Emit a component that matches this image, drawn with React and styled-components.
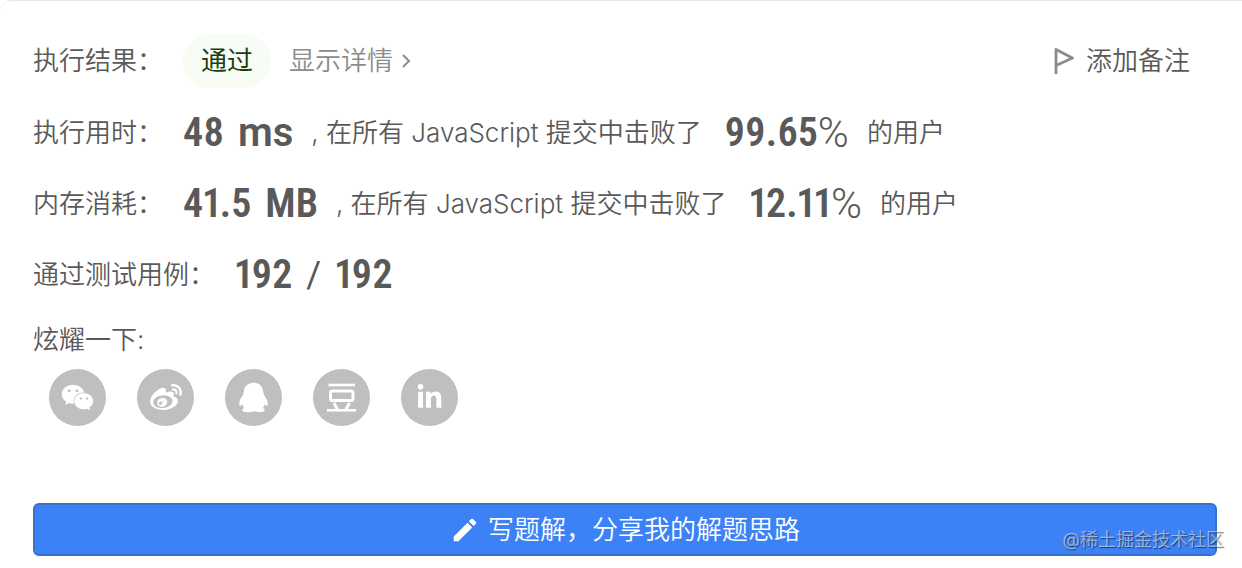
import React from 'react';
import styled, { createGlobalStyle } from 'styled-components';
import { FaWeixin, FaWeibo, FaLinkedinIn } from 'react-icons/fa';
import { MdEdit } from 'react-icons/md';

const GlobalStyle = createGlobalStyle`
  *, *::before, *::after { box-sizing: border-box; }
  body {
    margin: 0;
    background: #fff;
    color: #595959;
    font-family: Inter, "Noto Sans CJK SC", sans-serif;
    font-size: 26px;
    font-weight: 350;
    line-height: 40px;
  }
  button { font: inherit; color: inherit; cursor: pointer; }
`;

const Panel = styled.main`
  position: relative;
  padding: 24px 25px 12px 33px;
  border-top: 1px solid #e8e8e8;
  border-top-left-radius: 12px;
`;

const Row = styled.div`
  display: flex;
  align-items: center;
  height: ${(p) => p.$height}px;
  padding-right: 27px;
  white-space: nowrap;
`;

const Label = styled.span`
  margin-right: 20px;
`;

const Status = styled.strong`
  padding: 7px 18px;
  border-radius: 27px;
  background: #f7fdf5;
  color: #1d3d12;
  font-weight: 400;
`;

const DetailLink = styled.a`
  display: flex;
  align-items: center;
  gap: 8px;
  margin-left: 18px;
  color: #8c8c8c;
  text-decoration: none;
`;

const NoteButton = styled.button`
  display: flex;
  align-items: center;
  gap: 10px;
  margin-left: auto;
  padding: 0;
  border: 0;
  background: none;
`;

const Figure = styled.strong`
  display: flex;
  align-items: center;
  gap: 14px;
  font-family: "Roboto Condensed", Roboto, sans-serif;
  font-size: 40px;
  font-weight: 600;
  font-variant-numeric: proportional-nums;
`;

const Unit = styled.span`
  font-family: ${(p) => (p.$wide ? 'Roboto' : '"Roboto Condensed"')}, sans-serif;
`;

const Percent = styled.span`
  font-family: Roboto, sans-serif;
  font-size: 42px;
  font-weight: 300;
`;

const Sentence = styled.span`
  margin-left: 18px;
  margin-right: 23px;
`;

const Slash = styled.span`
  font-family: Roboto, sans-serif;
  font-size: 36px;
  font-weight: 400;
`;

const ShareTitle = styled.h2`
  margin: 8px 0 7px;
  font-size: 26px;
  font-weight: 350;
  line-height: 44px;
`;

const ShareList = styled.div`
  display: flex;
  gap: 31px;
  padding-left: 16px;
`;

const ShareButton = styled.button`
  display: flex;
  align-items: center;
  justify-content: center;
  width: 57px;
  height: 57px;
  padding: 0;
  border: 0;
  border-radius: 50%;
  background: #bfbfbf;
  color: #fff;
`;

const WriteButton = styled.button`
  display: flex;
  align-items: center;
  justify-content: center;
  gap: 8px;
  width: 100%;
  height: 53px;
  margin-top: 77px;
  border: 2px solid #3971c9;
  border-radius: 6px;
  background: #3c82f6;
  color: #fff;
`;

const Watermark = styled.span`
  position: absolute;
  right: 18px;
  bottom: 14px;
  color: rgba(255, 255, 255, 0.5);
  font-size: 18px;
  font-weight: 400;
  line-height: 28px;
  text-shadow: 1px 1px 1px rgba(0, 0, 0, 0.55);
  pointer-events: none;
`;

const Chevron = () => (
  <svg width="10" height="16" viewBox="0 0 10 16" fill="none" stroke="currentColor" strokeWidth="2" aria-hidden="true">
    <path d="M2 2l6 6-6 6" />
  </svg>
);

const Flag = () => (
  <svg width="22" height="28" viewBox="0 0 22 28" fill="none" stroke="#8c8c8c" strokeWidth="2.8" strokeLinejoin="round" aria-hidden="true">
    <path d="M2 27V2.500L18.500 11 2 18.500" />
  </svg>
);

const Penguin = () => (
  <svg width="31" height="31" viewBox="0 0 31 31" fill="currentColor" aria-hidden="true">
    <path d="M15.500.8C9.800.8 6.300 4.600 5.800 9.700L5 13C2.500 16 .8 20.500 1.300 23c.5 1.500 1.900.6 3-1 .4 1.700 1 3 2 4-1.700.6-2.300 1.600-1.800 2.700.9 2 7.500 1.700 11 .5 3.500 1.200 10.100 1.500 11-.5.5-1.100-.1-2.100-1.800-2.700 1-1 1.600-2.300 2-4 1.100 1.600 2.500 2.500 3 1 .5-2.500-1.200-7-3.700-10l-.8-3.300C24.700 4.600 21.200.8 15.500.8z" />
  </svg>
);

const Douban = () => (
  <svg width="31" height="31" viewBox="0 0 31 31" fill="none" stroke="currentColor" strokeLinejoin="round" aria-hidden="true">
    <path d="M2.500 3h26.500" strokeWidth="2.600" />
    <rect x="4.500" y="9" width="22.500" height="9.500" rx="2" strokeWidth="3" />
    <path d="M8 21l3.500 6.500M23.500 21L20 27.500" strokeWidth="3" />
    <path d="M1 28.300h29" strokeWidth="2.600" />
  </svg>
);

const channels = [
  ['微信', <FaWeixin size={33} />],
  ['微博', <FaWeibo size={32} />],
  ['QQ', <Penguin />],
  ['豆瓣', <Douban />],
  ['LinkedIn', <FaLinkedinIn size={27} />],
];

function Metric({ label, value, unit, wide, rate }) {
  return (
    <Row $height={71}>
      <Label>{label}：</Label>
      <Figure>
        <span>{value}</span>
        <Unit $wide={wide}>{unit}</Unit>
      </Figure>
      <Sentence>, 在所有 JavaScript 提交中击败了</Sentence>
      <Figure>{rate}</Figure>
      <Percent>%</Percent>
      <Sentence>的用户</Sentence>
    </Row>
  );
}

export default function App() {
  return (
    <>
      <GlobalStyle />
      <Panel>
        <Row $height={72}>
          <Label>执行结果：</Label>
          <Status>通过</Status>
          <DetailLink href="#detail">
            显示详情
            <Chevron />
          </DetailLink>
          <NoteButton type="button">
            <Flag />
            添加备注
          </NoteButton>
        </Row>
        <Metric label="执行用时" value="48" unit="ms" wide rate="99.65" />
        <Metric label="内存消耗" value="41.5" unit="MB" rate="12.11" />
        <Row $height={71}>
          <Label>通过测试用例：</Label>
          <Figure>
            <span>192</span>
            <Slash>/</Slash>
            <span>192</span>
          </Figure>
        </Row>
        <ShareTitle>炫耀一下:</ShareTitle>
        <ShareList>
          {channels.map(([name, icon]) => (
            <ShareButton key={name} type="button" aria-label={name}>
              {icon}
            </ShareButton>
          ))}
        </ShareList>
        <WriteButton type="button">
          <MdEdit size={30} />
          写题解，分享我的解题思路
        </WriteButton>
        <Watermark>@稀土掘金技术社区</Watermark>
      </Panel>
    </>
  );
}
